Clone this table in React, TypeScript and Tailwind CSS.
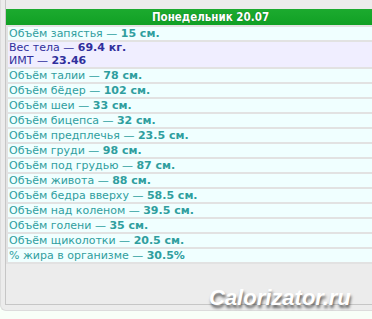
import React from "react";

type Row = { label: string; value: string };

const rows: Row[] = [
  { label: "Объём талии", value: "78 см." },
  { label: "Объём бёдер", value: "102 см." },
  { label: "Объём шеи", value: "33 см." },
  { label: "Объём бицепса", value: "32 см." },
  { label: "Объём предплечья", value: "23.5 см." },
  { label: "Объём груди", value: "98 см." },
  { label: "Объём под грудью", value: "87 см." },
  { label: "Объём живота", value: "88 см." },
  { label: "Объём бедра вверху", value: "58.5 см." },
  { label: "Объём над коленом", value: "39.5 см." },
  { label: "Объём голени", value: "35 см." },
  { label: "Объём щиколотки", value: "20.5 см." },
  { label: "% жира в организме", value: "30.5%" },
];

function MeasureRow({ label, value }: Row) {
  return (
    <div className="h-[13px] bg-[#f0ffff] pl-px text-[#2f9e9e] leading-[13px] whitespace-nowrap">
      {label} — <b>{value}</b>
    </div>
  );
}

export default function App() {
  return (
    <div className="w-[372px] h-[319px] overflow-hidden bg-[#f8fff8] font-['DejaVu_Sans',sans-serif] text-[11px]">
      <div className="relative w-[415px] h-[311px] bg-[#ececec] border-l border-b border-[#dcdcdc] rounded-bl-[6px] pl-[4px] pb-[5px]">
        <div className="h-[305px] border-l border-b border-[#c6c6c6] pt-[9px]">
          {/* Header */}
          <div className="h-[16px] bg-gradient-to-b from-[#1cab2f] to-[#10a024] text-white font-['DejaVu_Sans_Condensed','DejaVu_Sans',sans-serif] font-bold text-[11.5px] leading-[16px] text-center [text-shadow:0_0_1px_rgba(0,0,0,0.4)]">
            Понедельник 20.07
          </div>

          {/* Measurements */}
          <div className="bg-[#e2e2e2] p-[2px] flex flex-col gap-[2px]">
            <div className="h-[13px] bg-[#f0ffff] pl-px text-[#2f9e9e] leading-[13px] whitespace-nowrap">
              Объём запястья — <b>15 см.</b>
            </div>
            <div className="h-[25px] bg-[#f0eeff] pl-px text-[#30309c] leading-[12.5px] whitespace-nowrap">
              <div>Вес тела — <b>69.4 кг.</b></div>
              <div>ИМТ — <b>23.46</b></div>
            </div>
            {rows.map((r) => (
              <MeasureRow key={r.label} {...r} />
            ))}
          </div>
        </div>

        {/* Watermark */}
        <div className="absolute left-[208px] top-[281px] font-['Liberation_Sans',sans-serif] font-bold italic text-[22px] text-white [text-shadow:1px_3px_3px_rgba(0,0,0,0.6)]">
          Calorizator.ru
        </div>
      </div>
    </div>
  );
}
